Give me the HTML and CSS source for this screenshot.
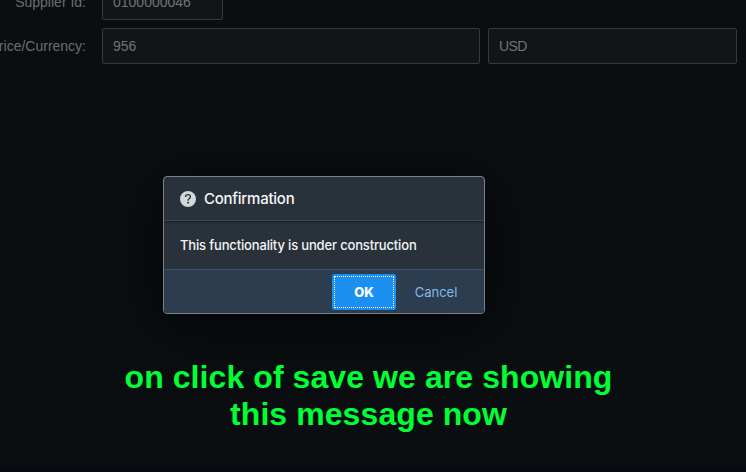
FILE: index.html
```html
<!DOCTYPE html>
<html lang="en">
<head>
<meta charset="utf-8">
<title>Confirmation</title>
<link rel="stylesheet" href="styles.css">
</head>
<body>
<main class="page">
  <form class="form">
    <div class="row">
      <label class="label">Supplier Id:</label>
      <div class="field field-short">0100000046</div>
    </div>
    <div class="row">
      <label class="label">Price/Currency:</label>
      <div class="field field-price">956</div>
      <div class="field field-currency">USD</div>
    </div>
  </form>
  <section class="dialog" role="dialog">
    <header class="dialog-header">
      <svg class="icon" viewBox="0 0 16 16"><circle cx="8" cy="8" r="8" fill="#d3d7da"/><path d="M5.6 6.1V5.6Q5.6 3.6 8 3.6T10.4 5.7Q10.4 6.8 9.3 7.5T8.1 9.6" fill="none" stroke="#29313a" stroke-width="1.4"/><rect x="7.2" y="10.8" width="1.7" height="1.7" fill="#29313a"/></svg>
      <h1 class="title">Confirmation</h1>
    </header>
    <div class="dialog-body">This functionality is under construction</div>
    <footer class="dialog-footer">
      <button class="button ok"><span class="focus">OK</span></button>
      <button class="button cancel">Cancel</button>
    </footer>
  </section>
  <p class="caption">on click of save we are showing<br>this message now</p>
</main>
<div class="bottom"></div>
</body>
</html>
```
FILE: styles.css
```css
* { box-sizing: border-box; }
body {
  margin: 0;
  width: 746px;
  height: 472px;
  overflow: hidden;
  background: #0a0e11;
  font: 13px/20px Inter, sans-serif;
}
.page { height: 467px; overflow: hidden; }
.form { margin-top: -16px; height: 192px; font: 14px/20px "Liberation Sans", sans-serif; }
.row { display: flex; height: 36px; margin-bottom: 8px; }
.label {
  width: 86px;
  margin-right: 16px;
  display: flex;
  align-items: center;
  justify-content: flex-end;
  white-space: nowrap;
  color: #6a6d6f;
}
.field {
  display: flex;
  align-items: center;
  height: 36px;
  padding: 0 10px;
  border: 1px solid #33383d;
  border-radius: 2px;
  background: #121518;
  color: #707375;
}
.field-short { width: 121px; }
.field-price { width: 378px; margin-right: 8px; }
.field-currency { width: 249px; letter-spacing: -0.6px; }
.dialog {
  width: 322px;
  height: 138px;
  margin-left: 163px;
  border: 1px solid #7d8185;
  border-radius: 4px;
  overflow: hidden;
  background: #29313a;
  box-shadow: 0 10px 60px #0009;
}
.dialog-header {
  display: flex;
  align-items: center;
  gap: 8px;
  height: 44px;
  padding-left: 16px;
  border-bottom: 1px solid #3a4653;
  box-shadow: 0 1px 2px #0006;
}
.icon { width: 16px; height: 16px; }
.title { margin: 0; font-size: 15px; font-weight: 500; letter-spacing: -0.25px; color: #f6f7f8; }
.dialog-body {
  display: flex;
  align-items: center;
  height: 48px;
  padding-left: 16px;
  font-weight: 500;
  letter-spacing: -0.16px;
  color: #f3f4f5;
}
.dialog-footer {
  display: flex;
  justify-content: flex-end;
  height: 44px;
  padding: 4px 16px 4px 0;
  border-top: 1px solid #39516b;
  background: #2c3d4f;
}
.button {
  height: 36px;
  padding: 0;
  border: 0;
  font: 13px/20px Inter, sans-serif;
}
.ok {
  width: 64px;
  margin-right: 8px;
  padding: 2px;
  border-radius: 3px;
  background: #1b90f0;
  color: #fff;
  font-weight: 800;
}
.focus {
  display: flex;
  align-items: center;
  justify-content: center;
  height: 32px;
  border: 1px dotted #fff;
}
.cancel { width: 64px; background: transparent; color: #85b9e9; }
.caption {
  width: 737px;
  margin: 45px 0 0;
  text-align: center;
  font: bold 32px/37px "Liberation Sans", sans-serif;
  letter-spacing: 0.08px;
  color: #00ff33;
}
.bottom { height: 5px; background: #080a11; }
```
